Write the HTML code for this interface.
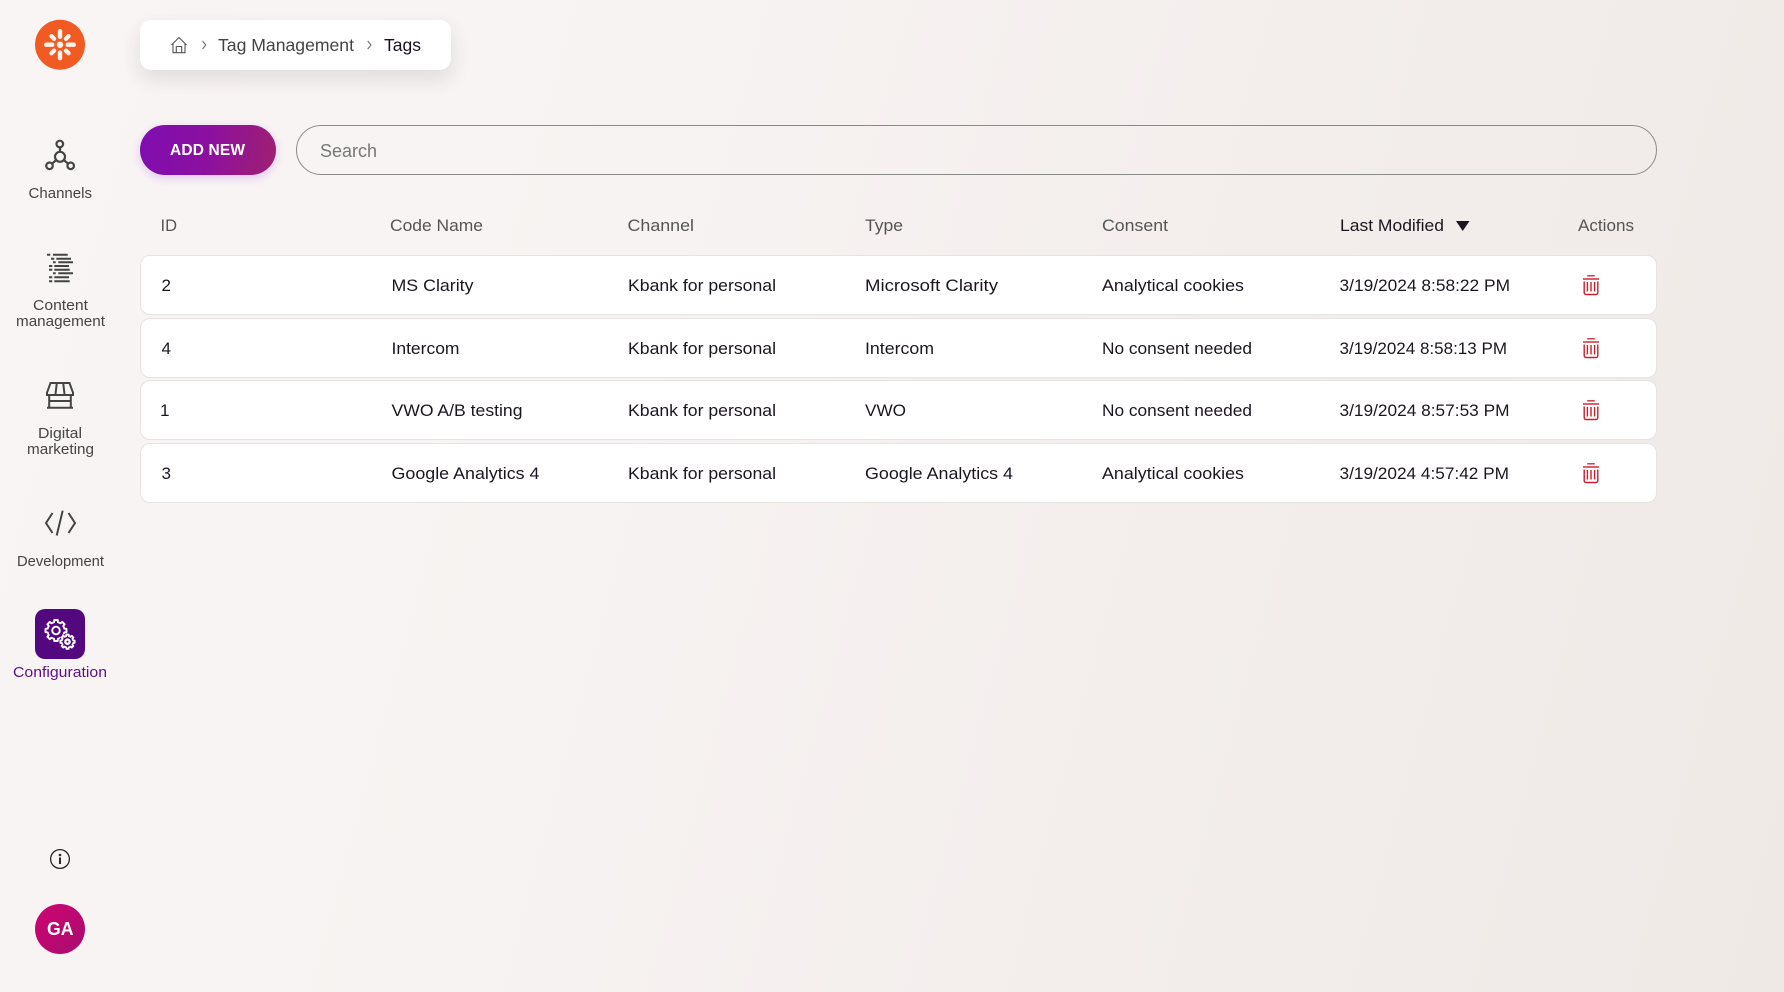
<!DOCTYPE html>
<html lang="en">
<head>
<meta charset="utf-8">
<title>Tags</title>
<style>
html,body{margin:0;padding:0;width:1784px;height:992px;overflow:hidden}
body{position:relative;background:linear-gradient(105deg,#f9f5f5 0%,#f7f3f2 35%,#f3eeec 65%,#efe9e6 100%);font-family:"Liberation Sans",sans-serif}
.box{position:absolute;box-sizing:border-box}
.crumb{left:140px;top:20px;width:311px;height:50px;background:#fff;border-radius:11px;box-shadow:0 9px 20px rgba(60,50,50,.12)}
.btn{left:140px;top:125px;width:136px;height:50px;border-radius:25px;background:linear-gradient(100deg,#7f0db0 0%,#8c10a0 50%,#a02070 100%);box-shadow:0 3px 10px rgba(150,40,220,.22)}
.search{left:296px;top:125px;width:1361px;height:50px;border-radius:25px;border:1px solid #8a8a8a}
.row{left:140px;width:1517px;background:#fff;border:1px solid #e6e3e1;border-radius:10px}
svg{position:absolute;left:0;top:0}
text{font-family:"Liberation Sans",sans-serif}
.h{font-size:17px;fill:#555}
.r{font-size:17px;fill:#1c1620}
.n{font-size:15px;fill:#444}
</style>
</head>
<body>
<div class="box crumb"></div>
<div class="box btn"></div>
<div class="box search"></div>
<div class="box row" style="top:255px;height:60px"></div>
<div class="box row" style="top:318px;height:60px"></div>
<div class="box row" style="top:380px;height:60px"></div>
<div class="box row" style="top:443px;height:60px"></div>

<svg width="1784" height="992" viewBox="0 0 1784 992" xmlns="http://www.w3.org/2000/svg">
<defs>
<path id="tooth" d="M-3.25-7.85L-1.91-8.28L-1.72-10.5L1.72-10.5L1.91-8.28L3.25-7.85"/>
<g id="gear" fill="none" stroke="#fff" stroke-linejoin="round">
<use href="#tooth"/><use href="#tooth" transform="rotate(45)"/><use href="#tooth" transform="rotate(90)"/><use href="#tooth" transform="rotate(135)"/><use href="#tooth" transform="rotate(180)"/><use href="#tooth" transform="rotate(225)"/><use href="#tooth" transform="rotate(270)"/><use href="#tooth" transform="rotate(315)"/>
</g>
<g id="trash" fill="none" stroke="#c9202f" stroke-width="1.4">
<path d="M0 4H16"/><path d="M4.2 .8H11.8" stroke-width="1.3"/>
<path d="M1.2 6.5V17.5Q1.2 19.5 3.2 19.5H12.8Q14.8 19.5 14.8 17.5V6.5"/>
<path d="M4.4 7V16.5M8 7V16.5M11.6 7V16.5"/>
</g>
<linearGradient id="ga" x1="0" y1="0" x2="1" y2="1"><stop offset="0" stop-color="#cf0570"/><stop offset="1" stop-color="#a80c70"/></linearGradient>
</defs>

<!-- logo -->
<circle cx="60" cy="44.7" r="25" fill="#f15a22"/>
<g fill="#fdf3ea" transform="translate(60 44.7)">
<circle r="3.2"/>
<rect x="-2.2" y="-15.7" width="4.4" height="10" rx="2.2"/>
<rect x="-2.2" y="5.7" width="4.4" height="10" rx="2.2"/>
<rect x="-16" y="-2.2" width="10.5" height="4.4" rx="2.2"/>
<rect x="5.5" y="-2.2" width="10.5" height="4.4" rx="2.2"/>
<rect x="-2.2" y="-14.2" width="4.4" height="8" rx="2.2" transform="rotate(45)"/>
<rect x="-2.2" y="-14.2" width="4.4" height="8" rx="2.2" transform="rotate(135)"/>
<rect x="-2.2" y="-14.2" width="4.4" height="8" rx="2.2" transform="rotate(225)"/>
<rect x="-2.2" y="-14.2" width="4.4" height="8" rx="2.2" transform="rotate(315)"/>
</g>

<!-- channels -->
<g fill="none" stroke="#444" stroke-width="2.2">
<circle cx="59.8" cy="144" r="3.3"/><circle cx="60" cy="156.8" r="5"/><circle cx="49.5" cy="165.8" r="3.3"/><circle cx="70.7" cy="165.8" r="3.3"/>
<path d="M60 147.3V151.8M56.2 160L52.2 163.6M63.8 160L68 163.6"/>
</g>
<text class="n" x="28.5" y="198" textLength="63.5" lengthAdjust="spacingAndGlyphs">Channels</text>

<!-- content -->
<g stroke="#444" stroke-width="2" fill="none">
<path d="M47 254.7H50.3M53 254.7H67.7"/>
<path d="M51 258.7H54.3M56.3 258.7H71"/>
<path d="M53 262.3H55.7M58.3 262.3H73"/>
<path d="M49 266H52.3M54.3 266H69"/>
<path d="M49 269.7H52.3M54.3 269.7H69.7"/>
<path d="M53 273.3H55.7M58.3 273.3H73"/>
<path d="M49 277.3H52.3M54.3 277.3H69"/>
<path d="M49 281.3H52.3M54.3 281.3H69.7"/>
</g>
<text class="n" x="33" y="310" textLength="55" lengthAdjust="spacingAndGlyphs">Content</text>
<text class="n" x="16" y="326" textLength="89" lengthAdjust="spacingAndGlyphs">management</text>

<!-- store -->
<g fill="none" stroke="#444" stroke-width="2">
<path d="M50.5 383H69.5L73 392.7V395H47V392.7Z"/><path d="M56.8 383L55.5 394M63.2 383L64.5 394"/>
<path d="M49.2 395V407.7M70.8 395V407.7M49.2 401H70.8"/><path d="M47 407.7H73"/>
</g>
<text class="n" x="38" y="438" textLength="44" lengthAdjust="spacingAndGlyphs">Digital</text>
<text class="n" x="27" y="454" textLength="67" lengthAdjust="spacingAndGlyphs">marketing</text>

<!-- development -->
<g fill="none" stroke="#444" stroke-width="2">
<path d="M52.5 513L46 523L52.5 533M62.7 510.7L56.7 535.5M68.5 513L75 523L68.5 533"/>
</g>
<text class="n" x="17" y="566" textLength="87" lengthAdjust="spacingAndGlyphs">Development</text>

<!-- configuration -->
<rect x="35" y="609" width="50" height="50" rx="10" fill="#540880"/>
<g transform="translate(56 630.5)" stroke-width="1.9"><use href="#gear"/><circle r="3.8" fill="none" stroke="#fff" stroke-width="1.9"/></g>
<circle cx="67.5" cy="641.7" r="8.2" fill="#540880"/>
<g transform="translate(67.5 641.7) scale(.68)" stroke-width="2.7"><use href="#gear"/><circle r="3.2" fill="none" stroke="#fff" stroke-width="3.4"/></g>
<text x="13" y="677" font-size="15" fill="#5b0f8a" textLength="94" lengthAdjust="spacingAndGlyphs">Configuration</text>

<!-- info -->
<circle cx="60" cy="859" r="9.4" fill="none" stroke="#2a2a2a" stroke-width="1.3"/>
<circle cx="60" cy="855" r="1.3" fill="#2a2a2a"/><rect x="59" y="857.5" width="2" height="6.5" fill="#2a2a2a"/>

<!-- avatar -->
<circle cx="60" cy="929" r="25" fill="url(#ga)"/>
<text x="47" y="935" font-size="18" font-weight="700" fill="#fff" textLength="26.5" lengthAdjust="spacingAndGlyphs">GA</text>

<!-- breadcrumb -->
<g fill="none" stroke="#555" stroke-width="1.1">
<path d="M171.5 45L179 37.5L186.5 45M173 43.5V52.7H185V43.5M176.3 52.7V46.5H181.7V52.7"/>
<path d="M202.5 41L205.8 45L202.5 49M367.7 41L371 45L367.7 49" stroke="#666" stroke-width="1"/>
</g>
<text x="218" y="51" font-size="17.5" fill="#444" textLength="136" lengthAdjust="spacingAndGlyphs">Tag Management</text>
<text x="384" y="51" font-size="17.5" fill="#1b1020" textLength="37" lengthAdjust="spacingAndGlyphs">Tags</text>

<!-- button + search -->
<text x="170" y="155" font-size="15.5" font-weight="700" fill="#fff" textLength="75" lengthAdjust="spacing">ADD NEW</text>
<text x="320" y="157" font-size="18" fill="#777" textLength="57" lengthAdjust="spacingAndGlyphs">Search</text>

<!-- header -->
<text class="h" x="160.5" y="231" textLength="16.5" lengthAdjust="spacingAndGlyphs">ID</text>
<text class="h" x="390" y="231" textLength="93" lengthAdjust="spacingAndGlyphs">Code Name</text>
<text class="h" x="627.5" y="231" textLength="66.5" lengthAdjust="spacingAndGlyphs">Channel</text>
<text class="h" x="865" y="231" textLength="38" lengthAdjust="spacingAndGlyphs">Type</text>
<text class="h" x="1102" y="231" textLength="66" lengthAdjust="spacingAndGlyphs">Consent</text>
<text class="h" x="1340" y="231" textLength="104" lengthAdjust="spacingAndGlyphs" style="fill:#1c1620">Last Modified</text>
<path d="M1456 221H1469.5L1462.7 231Z" fill="#1c1620"/>
<text class="h" x="1578" y="231" textLength="56" lengthAdjust="spacingAndGlyphs">Actions</text>

<!-- row 1 -->
<text class="r" x="161.5" y="291" textLength="9.5" lengthAdjust="spacingAndGlyphs">2</text>
<text class="r" x="391.5" y="291" textLength="82" lengthAdjust="spacingAndGlyphs">MS Clarity</text>
<text class="r" x="628" y="291" textLength="148" lengthAdjust="spacingAndGlyphs">Kbank for personal</text>
<text class="r" x="865" y="291" textLength="133" lengthAdjust="spacingAndGlyphs">Microsoft Clarity</text>
<text class="r" x="1102" y="291" textLength="142" lengthAdjust="spacingAndGlyphs">Analytical cookies</text>
<text class="r" x="1339.5" y="291" textLength="170.5" lengthAdjust="spacingAndGlyphs">3/19/2024 8:58:22 PM</text>
<use href="#trash" x="1583" y="275"/>

<!-- row 2 -->
<text class="r" x="161.5" y="354" textLength="9.5" lengthAdjust="spacingAndGlyphs">4</text>
<text class="r" x="391.5" y="354" textLength="68" lengthAdjust="spacingAndGlyphs">Intercom</text>
<text class="r" x="628" y="354" textLength="148" lengthAdjust="spacingAndGlyphs">Kbank for personal</text>
<text class="r" x="865" y="354" textLength="69" lengthAdjust="spacingAndGlyphs">Intercom</text>
<text class="r" x="1102" y="354" textLength="150" lengthAdjust="spacingAndGlyphs">No consent needed</text>
<text class="r" x="1339.5" y="354" textLength="167.5" lengthAdjust="spacingAndGlyphs">3/19/2024 8:58:13 PM</text>
<use href="#trash" x="1583" y="338"/>

<!-- row 3 -->
<text class="r" x="160" y="416" textLength="9.5" lengthAdjust="spacingAndGlyphs">1</text>
<text class="r" x="391.5" y="416" textLength="131" lengthAdjust="spacingAndGlyphs">VWO A/B testing</text>
<text class="r" x="628" y="416" textLength="148" lengthAdjust="spacingAndGlyphs">Kbank for personal</text>
<text class="r" x="865" y="416" textLength="41" lengthAdjust="spacingAndGlyphs">VWO</text>
<text class="r" x="1102" y="416" textLength="150" lengthAdjust="spacingAndGlyphs">No consent needed</text>
<text class="r" x="1339.5" y="416" textLength="170" lengthAdjust="spacingAndGlyphs">3/19/2024 8:57:53 PM</text>
<use href="#trash" x="1583" y="400"/>

<!-- row 4 -->
<text class="r" x="161.5" y="479" textLength="9.5" lengthAdjust="spacingAndGlyphs">3</text>
<text class="r" x="391.5" y="479" textLength="148" lengthAdjust="spacingAndGlyphs">Google Analytics 4</text>
<text class="r" x="628" y="479" textLength="148" lengthAdjust="spacingAndGlyphs">Kbank for personal</text>
<text class="r" x="865" y="479" textLength="148" lengthAdjust="spacingAndGlyphs">Google Analytics 4</text>
<text class="r" x="1102" y="479" textLength="142" lengthAdjust="spacingAndGlyphs">Analytical cookies</text>
<text class="r" x="1339.5" y="479" textLength="169.5" lengthAdjust="spacingAndGlyphs">3/19/2024 4:57:42 PM</text>
<use href="#trash" x="1583" y="463"/>
</svg>
</body>
</html>
